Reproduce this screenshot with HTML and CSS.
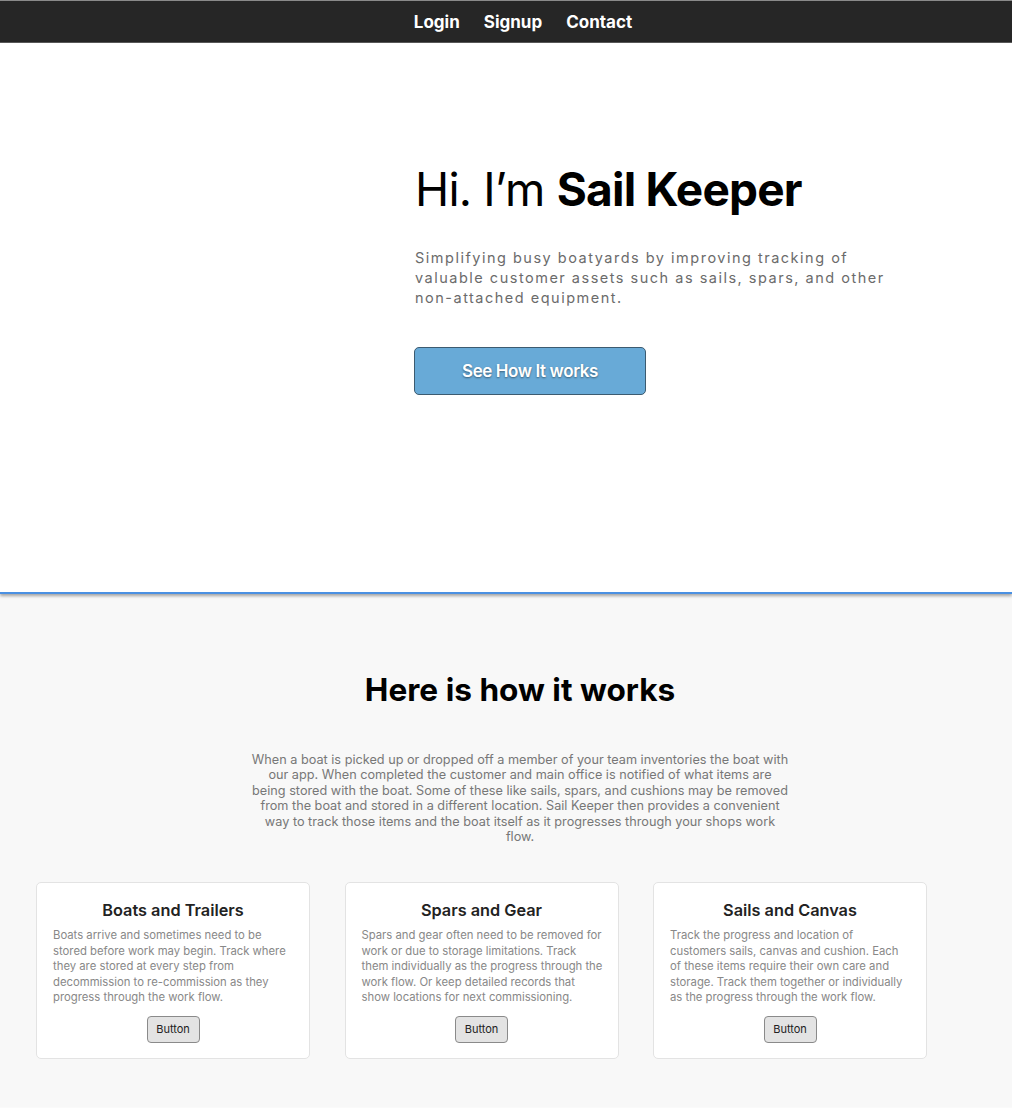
FILE: index.html
```html
<!DOCTYPE html>
<html lang="en">
<head>
<meta charset="utf-8">
<title>Sail Keeper</title>
<link rel="stylesheet" href="styles.css">
</head>
<body>
<nav class="topnav">
  <ul class="nav-list">
    <li><a href="#">Login</a></li>
    <li><a href="#">Signup</a></li>
    <li><a href="#">Contact</a></li>
  </ul>
</nav>
<header class="hero">
  <div class="hero-inner">
    <h1 class="hero-title">Hi. I’m <strong>Sail Keeper</strong></h1>
    <p class="hero-sub">Simplifying busy boatyards by improving tracking of valuable customer assets such as sails, spars, and other non-attached equipment.</p>
    <button class="hero-btn">See How It works</button>
  </div>
</header>
<section class="how">
  <h2 class="how-title">Here is how it works</h2>
  <p class="how-text">When a boat is picked up or dropped off a member of your team inventories the boat with our app. When completed the customer and main office is notified of what items are being stored with the boat. Some of these like sails, spars, and cushions may be removed from the boat and stored in a different location. Sail Keeper then provides a convenient way to track those items and the boat itself as it progresses through your shops work flow.</p>
  <div class="cards">
    <div class="card">
      <h3 class="card-title">Boats and Trailers</h3>
      <p class="card-text">Boats arrive and sometimes need to be stored before work may begin. Track where they are stored at every step from decommission to re-commission as they progress through the work flow.</p>
      <button class="card-btn">Button</button>
    </div>
    <div class="card">
      <h3 class="card-title">Spars and Gear</h3>
      <p class="card-text">Spars and gear often need to be removed for work or due to storage limitations. Track them individually as the progress through the work flow. Or keep detailed records that show locations for next commissioning.</p>
      <button class="card-btn">Button</button>
    </div>
    <div class="card">
      <h3 class="card-title">Sails and Canvas</h3>
      <p class="card-text">Track the progress and location of customers sails, canvas and cushion. Each of these items require their own care and storage. Track them together or individually as the progress through the work flow.</p>
      <button class="card-btn">Button</button>
    </div>
  </div>
</section>
</body>
</html>
```
FILE: styles.css
```css
* { box-sizing: border-box; }
html, body {
  margin: 0;
  padding: 0;
  background: #fafafa;
  font-family: Inter, "Noto Sans", sans-serif;
}
.topnav {
  background: #262626;
  border-top: 1px solid #8a8a8a;
  border-bottom: 1px solid #5a5a5a;
  height: 43px;
}
.nav-list {
  list-style: none;
  margin: 0;
  padding: 0 0 0 34px;
  height: 41px;
  display: flex;
  justify-content: center;
  align-items: center;
  gap: 24px;
}
.nav-list a {
  color: #fff;
  text-decoration: none;
  font-weight: 700;
  font-size: 17px;
}
.hero {
  background: #fff;
  height: 551px;
  border-bottom: 2px solid #4a90e2;
  box-shadow: 0 2px 3px rgba(0,0,0,0.35);
  position: relative;
  z-index: 1;
}
.hero-inner {
  padding: 117px 0 0 415px;
}
.hero-title {
  margin: 0;
  font-size: 46px;
  line-height: 58px;
  font-weight: 400;
  color: #000;
  letter-spacing: -0.8px;
}
.hero-title strong { font-weight: 700; }
.hero-sub {
  margin: 30px 0 0;
  width: 480px;
  font-size: 14.5px;
  line-height: 20px;
  letter-spacing: 1.5px;
  color: #6b6b6b;
}
.hero-btn {
  margin: 39px 0 0 -1px;
  width: 232px;
  height: 48px;
  background: #68aad7;
  border: 1px solid #3c5b70;
  border-radius: 5px;
  color: #fff;
  font-family: inherit;
  font-size: 17px;
  font-weight: 600;
  text-shadow: 0 1px 2px rgba(0,0,0,0.45);
  letter-spacing: -0.4px;
}
.how {
  background: #f8f8f8;
  padding: 76px 0 48px;
}
.how-title {
  margin: 0;
  text-align: center;
  font-size: 31.6px;
  line-height: 39px;
  font-weight: 700;
  color: #000;
  padding-left: 28px;
}
.how-text {
  margin: 43px auto 0;
  width: 539px;
  position: relative;
  left: 14px;
  text-align: center;
  font-size: 12.7px;
  line-height: 15.4px;
  color: #777;
}
.cards {
  margin: 38px 0 0 36px;
  display: flex;
  gap: 34.5px;
}
.card {
  width: 274px;
  height: 177px;
  background: #fff;
  border: 1px solid #e3e3e3;
  border-radius: 5px;
  padding: 17px 16px 0;
  display: flex;
  flex-direction: column;
  align-items: center;
}
.card-title {
  margin: 0;
  font-size: 16.3px;
  line-height: 20px;
  font-weight: 600;
  color: #222;
}
.card-text {
  margin: 8px -2px 0 0;
  align-self: stretch;
  font-size: 11.3px;
  line-height: 15.5px;
  color: #888;
}
.card-btn {
  margin-top: 10px;
  width: 53px;
  height: 27px;
  background: #e3e3e3;
  border: 1px solid #8a8a8a;
  border-radius: 4px;
  font-family: inherit;
  font-size: 11px;
  color: #222;
  padding: 0;
}
```
